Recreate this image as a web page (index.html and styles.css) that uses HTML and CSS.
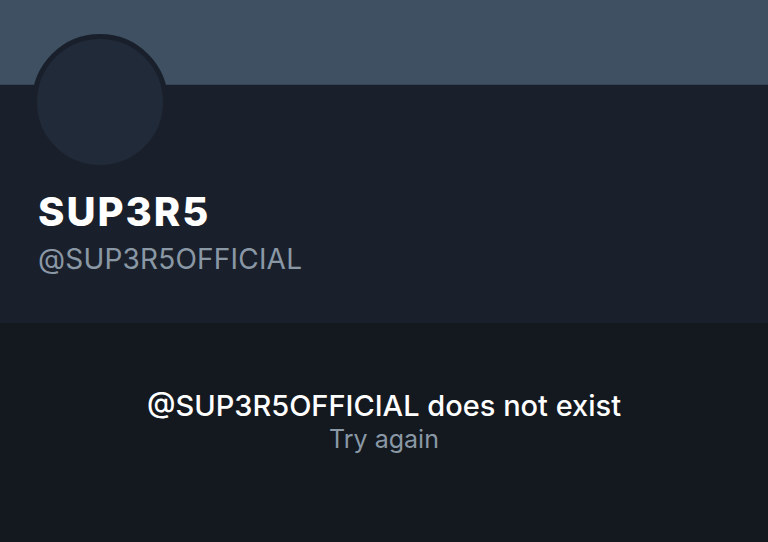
FILE: index.html
```html
<!DOCTYPE html>
<html>
<head>
<meta charset="utf-8">
<link rel="stylesheet" href="styles.css">
</head>
<body>
<div class="page">
  <div class="banner"></div>
  <section class="profile">
    <div class="avatar"></div>
    <h1 class="name">SUP3R5</h1>
    <div class="handle">@SUP3R5OFFICIAL</div>
  </section>
  <section class="empty">
    <div class="msg">@SUP3R5OFFICIAL does not exist</div>
    <div class="retry">Try again</div>
  </section>
</div>
</body>
</html>
```
FILE: styles.css
```css
html, body {
  margin: 0;
  padding: 0;
  background: #14181f;
}
.page {
  width: 768px;
  height: 542px;
  overflow: hidden;
  display: flex;
  flex-direction: column;
  font-family: Inter, "Liberation Sans", sans-serif;
}
.banner {
  height: 85px;
  background: #3e5062;
  border-bottom: 1px solid #344455;
  box-sizing: border-box;
}
.profile {
  height: 238px;
  background: #1a202b;
  padding-left: 32px;
  display: flex;
  flex-direction: column;
  align-items: flex-start;
}
.avatar {
  width: 126px;
  height: 126px;
  border-radius: 50%;
  background: #212a38;
  border: 5px solid #19202c;
  margin-top: -51px;
}
.name {
  margin: 22px 0 0 6px;
  font-size: 40px;
  line-height: 40px;
  font-weight: 800;
  letter-spacing: 2px;
  color: #ffffff;
}
.handle {
  margin: 13px 0 0 6px;
  font-size: 28px;
  line-height: 28px;
  letter-spacing: 0.2px;
  color: #8a98a6;
}
.empty {
  flex: 1;
  background: #14181f;
  display: flex;
  flex-direction: column;
  align-items: center;
  padding-top: 68px;
}
.msg {
  font-size: 29px;
  line-height: 29px;
  font-weight: 500;
  color: #ffffff;
}
.retry {
  margin-top: 7px;
  font-size: 25px;
  line-height: 25px;
  color: #8a98a6;
}
```
